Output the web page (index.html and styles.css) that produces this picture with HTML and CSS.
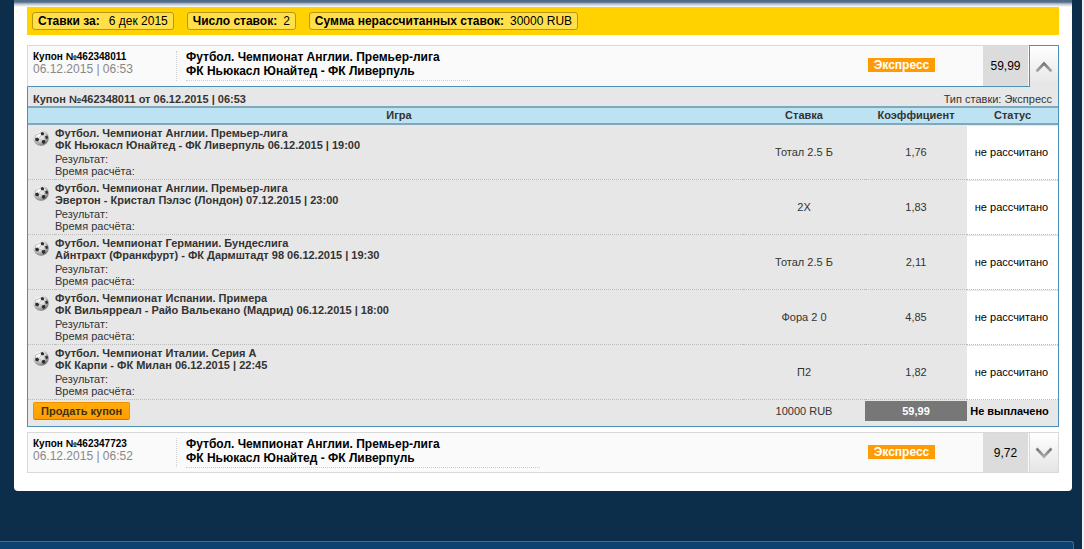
FILE: index.html
```html
<!DOCTYPE html>
<html lang="ru">
<head>
<meta charset="utf-8">
<title>История ставок</title>
<link rel="stylesheet" href="styles.css">
</head>
<body>
<svg class="defs" aria-hidden="true">
  <defs>
    <radialGradient id="shade" cx="0.36" cy="0.3" r="0.75">
      <stop offset="0" stop-color="#fff"/><stop offset="0.5" stop-color="#dcdcdc"/><stop offset="1" stop-color="#707070"/>
    </radialGradient>
    <linearGradient id="metal" x1="0" y1="0" x2="0" y2="1">
      <stop offset="0" stop-color="#777"/><stop offset="1" stop-color="#aaa"/>
    </linearGradient>
    <symbol id="ball" viewBox="0 0 16 16">
      <circle cx="8" cy="8" r="7.8" fill="url(#shade)"/>
      <path d="M7.6 2.8 9.6 2 11.2 3.2 10.6 5.2 8.2 5.2Z M12.4 6 14.4 5.4 15 7.8 13.8 9.4 12.2 8Z M2 8.4 4.6 7.6 6.2 9.2 5.2 11.4 2.6 11Z M9.2 10.2 11.8 10 12.6 12.2 10.8 14 8.6 12.6Z" fill="#2c2c2c"/>
      <path d="M8.2 5.2 6 8.6 M10.6 5.2 12.2 7.6 M6.2 9.2 9.2 10.6 M11.8 10 13.6 9.2 M2.4 8 2.4 5.2 7.6 3 M5.2 11.4 6.4 14.4 9 12.8" fill="none" stroke="#aaa" stroke-width=".7"/>
    </symbol>
  </defs>
</svg>
<main class="panel">
  <div class="summary">
    <span class="chip"><b>Ставки за:</b> <span>6 дек 2015</span></span>
    <span class="chip"><b>Число ставок:</b> <span>2</span></span>
    <span class="chip"><b>Сумма нерассчитанных ставок:</b> <span>30000 RUB</span></span>
  </div>

  <section class="bet open">
    <div class="coupon">
      <div class="coupon-id"><b>Купон №462348011</b><time>06.12.2015 | 06:53</time></div>
      <div class="coupon-event"><div class="event">Футбол. Чемпионат Англии. Премьер-лига<br>ФК Ньюкасл Юнайтед - ФК Ливерпуль</div></div>
      <div class="kind"><span class="tag">Экспресс</span></div>
      <div class="odds">59,99</div>
      <button class="toggle" type="button" aria-label="Свернуть"><svg width="18" height="12" viewBox="0 0 18 12"><path d="M1.5 10.5 9 2.5 16.5 10.5" fill="none" stroke="url(#metal)" stroke-width="2.6"/></svg></button>
    </div>
    <div class="details">
      <div class="details-head"><b>Купон №462348011 от 06.12.2015 | 06:53</b><span>Тип ставки: Экспресс</span></div>
      <table class="games">
        <colgroup><col class="col-icon"><col><col class="col-pick"><col class="col-odds"><col class="col-status"></colgroup>
        <thead><tr><th></th><th>Игра</th><th>Ставка</th><th>Коэффициент</th><th>Статус</th></tr></thead>
        <tbody>
          <tr><td class="icon"><svg class="ball"><use href="#ball"/></svg></td><td class="game"><b>Футбол. Чемпионат Англии. Премьер-лига<br>ФК Ньюкасл Юнайтед - ФК Ливерпуль 06.12.2015 | 19:00</b><p>Результат:<br>Время расчёта:</p></td><td>Тотал 2.5 Б</td><td>1,76</td><td class="status">не рассчитано</td></tr>
          <tr><td class="icon"><svg class="ball"><use href="#ball"/></svg></td><td class="game"><b>Футбол. Чемпионат Англии. Премьер-лига<br>Эвертон - Кристал Пэлэс (Лондон) 07.12.2015 | 23:00</b><p>Результат:<br>Время расчёта:</p></td><td>2X</td><td>1,83</td><td class="status">не рассчитано</td></tr>
          <tr><td class="icon"><svg class="ball"><use href="#ball"/></svg></td><td class="game"><b>Футбол. Чемпионат Германии. Бундеслига<br>Айнтрахт (Франкфурт) - ФК Дармштадт 98 06.12.2015 | 19:30</b><p>Результат:<br>Время расчёта:</p></td><td>Тотал 2.5 Б</td><td>2,11</td><td class="status">не рассчитано</td></tr>
          <tr><td class="icon"><svg class="ball"><use href="#ball"/></svg></td><td class="game"><b>Футбол. Чемпионат Испании. Примера<br>ФК Вильярреал - Райо Вальекано (Мадрид) 06.12.2015 | 18:00</b><p>Результат:<br>Время расчёта:</p></td><td>Фора 2 0</td><td>4,85</td><td class="status">не рассчитано</td></tr>
          <tr><td class="icon"><svg class="ball"><use href="#ball"/></svg></td><td class="game"><b>Футбол. Чемпионат Италии. Серия А<br>ФК Карпи - ФК Милан 06.12.2015 | 22:45</b><p>Результат:<br>Время расчёта:</p></td><td>П2</td><td>1,82</td><td class="status">не рассчитано</td></tr>
        </tbody>
        <tfoot><tr><td class="sell-cell" colspan="2"><button class="sell" type="button">Продать купон</button></td><td>10000 RUB</td><td><div class="total">59,99</div></td><td class="payout">Не выплачено</td></tr></tfoot>
      </table>
    </div>
  </section>

  <section class="bet">
    <div class="coupon">
      <div class="coupon-id"><b>Купон №462347723</b><time>06.12.2015 | 06:52</time></div>
      <div class="coupon-event"><div class="event wide">Футбол. Чемпионат Англии. Премьер-лига<br>ФК Ньюкасл Юнайтед - ФК Ливерпуль</div></div>
      <div class="kind"><span class="tag">Экспресс</span></div>
      <div class="odds">9,72</div>
      <button class="toggle" type="button" aria-label="Развернуть"><svg width="18" height="12" viewBox="0 0 18 12"><path d="M1.5 1.5 9 9.5 16.5 1.5" fill="none" stroke="url(#metal)" stroke-width="2.6"/></svg></button>
    </div>
  </section>
</main>
<footer class="footer"></footer>
</body>
</html>
```
FILE: styles.css
```css
* { box-sizing: border-box; }
html { background: #0c2e4a; }
body {
  margin: 0;
  min-height: 100vh;
  display: flex;
  flex-direction: column;
  border-right: 2px solid #f0f0f0;
  overflow: hidden;
  background: #0c2e4a;
  color: #000;
  font: 12px/14px "Liberation Sans", Arial, sans-serif;
}
button { font: inherit; cursor: pointer; }
.defs { position: absolute; width: 0; height: 0; }

.panel {
  margin: 0 10px 0 14px;
  padding: 7px 13px 18px;
  border-radius: 0 0 4px 4px;
  background: linear-gradient(#506b87 0, #506b87 2px, #b9c3ce 4px, #fff 7px);
}
.summary {
  display: flex;
  align-items: center;
  gap: 13px;
  height: 28px;
  margin-bottom: 10px;
  padding: 0 5px;
  background: #ffd200;
}
.chip {
  display: flex;
  gap: 6px;
  padding: 1px 5px;
  border: 1px solid #b99714;
  border-radius: 3px;
  background: #ffdf4a;
}
.chip:first-child { gap: 9px; }

.bet { margin-bottom: 5px; }
.bet:last-child { margin-bottom: 0; }
.coupon {
  display: flex;
  height: 41px;
  border: 1px solid #d9d9d9;
  background: #fafafa;
}
.coupon-id {
  width: 149px;
  margin: 5px 0;
  padding-left: 5px;
  border-right: 1px dotted #d0d0d0;
}
.coupon-id b { display: block; font-size: 10px; line-height: 12px; }
.coupon-id time { display: block; color: #888; line-height: 12px; }
.coupon-event { flex: 1; padding: 4px 0 0 9px; font-weight: bold; }
.event { width: 284px; padding-bottom: 2px; border-bottom: 1px dotted #ccc; }
.event.wide { width: 354px; }
.kind { width: 115px; padding-top: 12px; }
.tag {
  display: block;
  width: 67px;
  background: #ff9b05;
  color: #fff;
  font-weight: bold;
  text-align: center;
}
.odds {
  display: grid;
  place-items: center;
  width: 45px;
  background: #dcdcdc;
}
.toggle {
  display: grid;
  place-items: center;
  width: 29px;
  margin-left: 1px;
  padding: 0;
  border: 0;
  border-left: 1px solid #d9d9d9;
  background: linear-gradient(#fff, #e5e5e5);
}
.open .coupon { height: 42px; border-bottom-color: #4a90b8; border-right: 0; }
.open .toggle {
  width: 30px;
  margin-top: -1px;
  margin-bottom: -1px;
  border: 1px solid #4a90b8;
  border-bottom: 0;
}

.details {
  border: 1px solid #4a90b8;
  border-top: 0;
  background: #e7e7e7;
  color: #333;
  font-size: 11px;
  line-height: 12px;
}
.details-head {
  display: flex;
  justify-content: space-between;
  padding: 6px 6px 1px 5px;
}
.games {
  width: 100%;
  table-layout: fixed;
  border-collapse: separate;
  border-spacing: 0;
  text-align: center;
}
.col-icon { width: 27px; }
.col-pick { width: 122px; }
.col-odds { width: 102px; }
.col-status { width: 91px; }
.games th {
  height: 19px;
  padding: 0 0 1px;
  border-top: 2px solid #7fa8bc;
  border-bottom: 2px solid #7fa8bc;
  background: #bde3f3;
}
.games td { padding: 0; }
.games tbody td {
  height: 55px;
  border-bottom: 1px dotted #bbb;
}
.games .icon { padding: 5px 0 0 5px; vertical-align: top; }
.ball { display: block; width: 16px; height: 16px; }
.games .game { padding-top: 2px; text-align: left; vertical-align: top; }
.game p { margin: 2px 0 0; }
.games .status {
  padding: 0 2px 2px 0;
  border-top: 1px solid #e7e7e7;
  background: #fff;
  color: #000;
}
.games tfoot td { padding-bottom: 4px; }
.games tfoot .sell-cell { padding: 2px 0 6px 5px; text-align: left; }
.sell {
  display: block;
  height: 18px;
  padding: 0 7px;
  border: 1px solid #f29100;
  border-bottom-color: #d87700;
  border-radius: 2px;
  background: linear-gradient(#ffae0c, #ff9c00);
  color: #40310e;
  font-weight: bold;
}
.total { padding: 4px 0; background: #777; color: #fff; font-weight: bold; }
.games .payout { padding-right: 6px; color: #000; font-weight: bold; white-space: nowrap; }

.footer {
  height: 8px;
  margin: auto 8px 0 0;
  border-top: 1px solid #376d99;
  border-right: 1px solid #376d99;
  border-top-right-radius: 3px;
  background: #0d416f;
}
```
